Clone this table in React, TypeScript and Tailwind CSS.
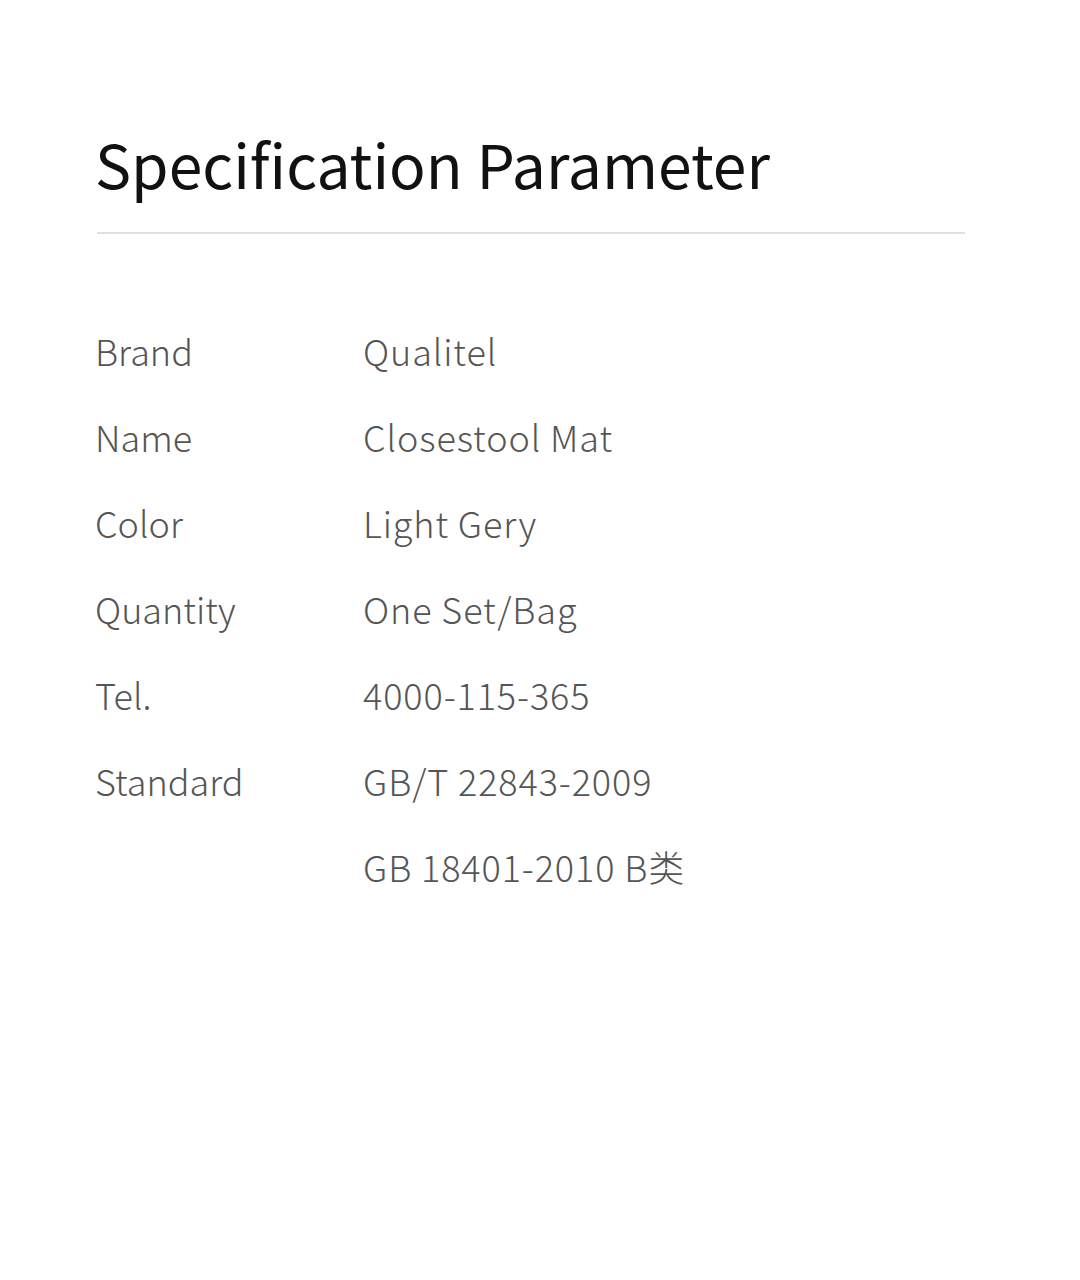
export default function App() {
  const rows: [string, string][] = [
    ["Brand", "Qualitel"],
    ["Name", "Closestool Mat"],
    ["Color", "Light Gery"],
    ["Quantity", "One Set/Bag"],
    ["Tel.", "4000-115-365"],
    ["Standard", "GB/T 22843-2009"],
    ["", "GB 18401-2010 B类"],
  ];
  return (
    <div
      className="w-[1080px] h-[1280px] bg-white pl-[95px] pr-[115px] pt-[118px]"
      style={{ fontFamily: '"Noto Sans CJK SC", "Noto Sans", sans-serif' }}
    >
      <h1 className="text-[60.6px] leading-[90px] font-normal text-[#111]">
        Specification Parameter
      </h1>
      <div className="mt-[24px] h-[2px] bg-[#e0e0e0] ml-[2px]" />
      <div className="mt-[73px] flex flex-col">
        {rows.map(([k, v], i) => (
          <div key={i} className="flex h-[86px] items-center text-[36px] font-light text-[#555]">
            <div className="w-[268px]">{k}</div>
            <div className="tracking-[0.9px]">{v}</div>
          </div>
        ))}
      </div>
    </div>
  );
}
